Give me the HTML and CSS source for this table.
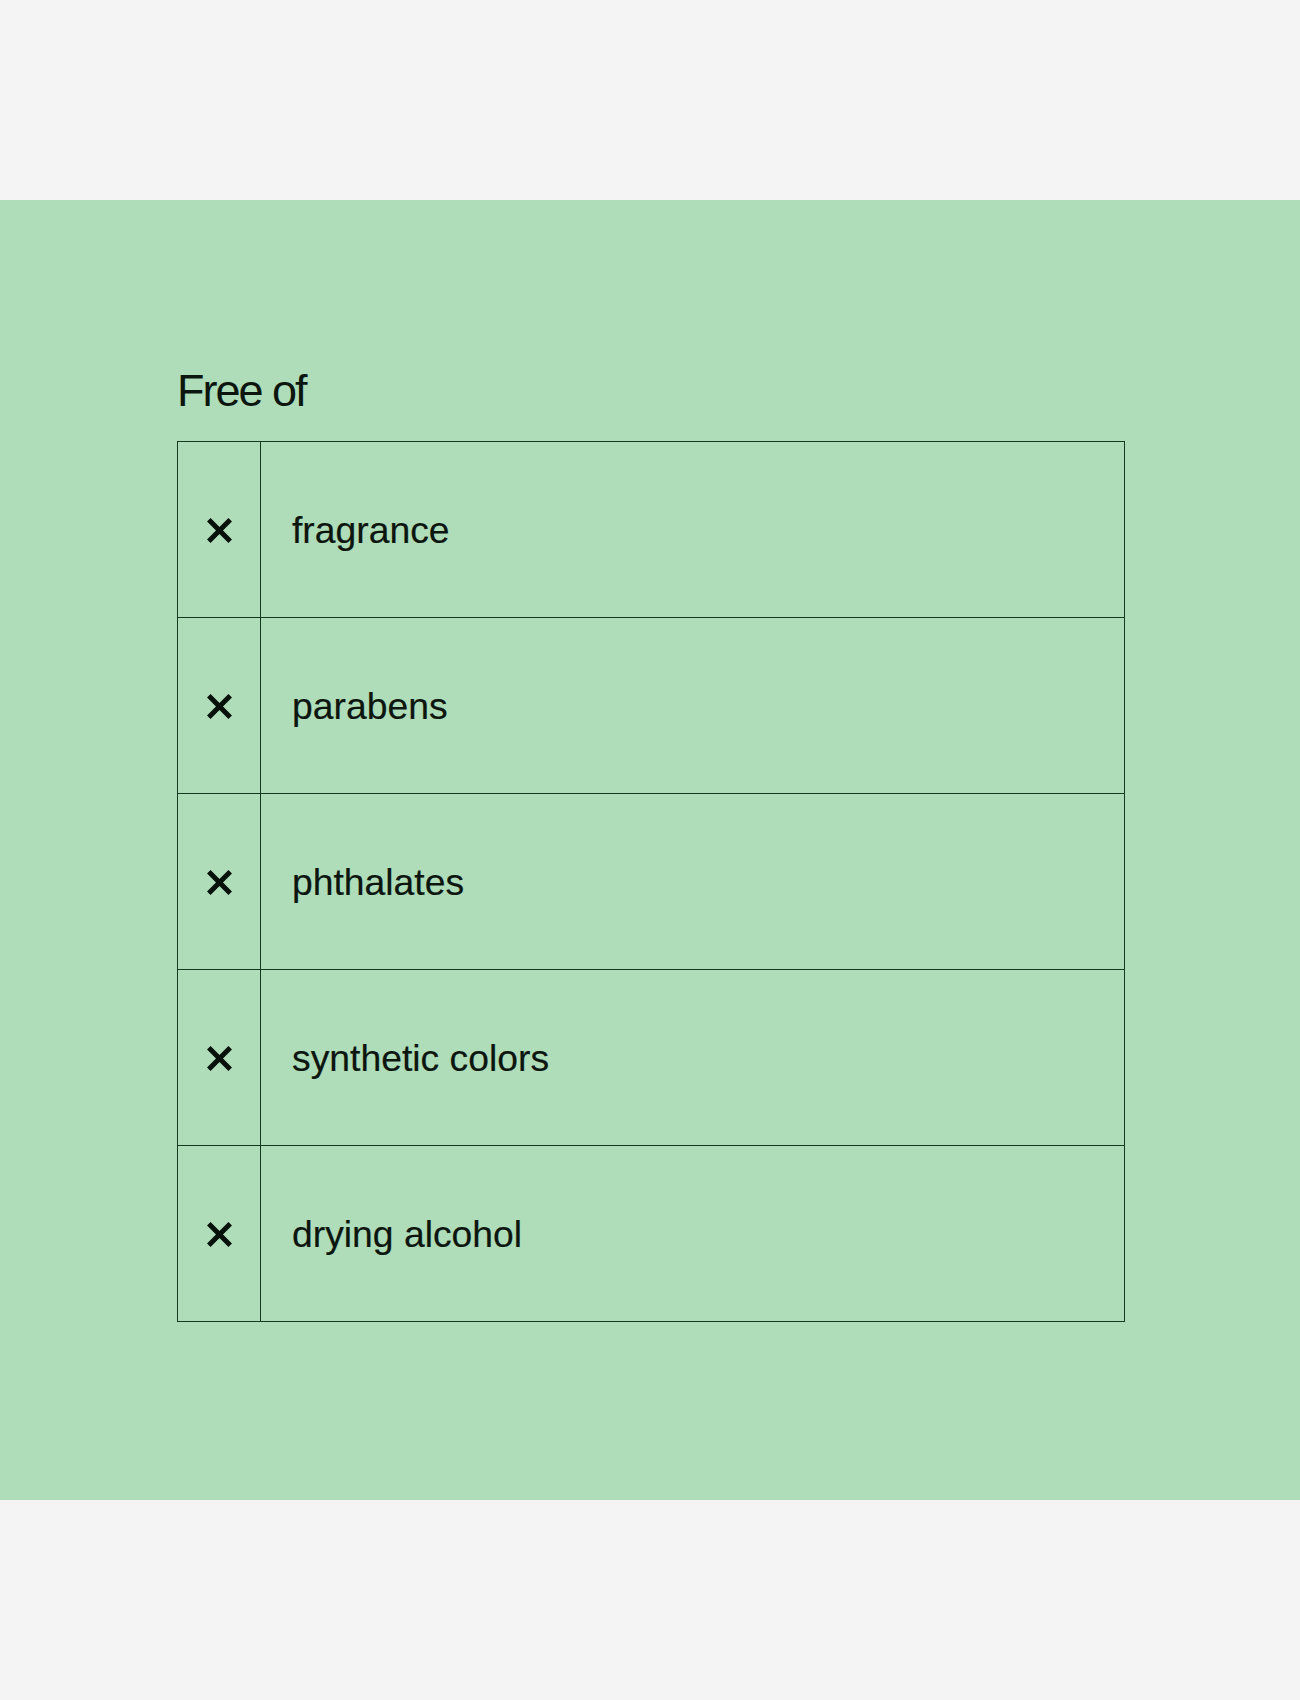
FILE: index.html
```html
<!DOCTYPE html>
<html lang="en">
<head>
<meta charset="utf-8">
<title>Free of</title>
<link rel="stylesheet" href="styles.css">
</head>
<body>
<div class="page">
  <section class="panel">
    <h2 class="title">Free of</h2>
    <div class="list">
      <div class="row">
        <div class="mark"><svg class="x" viewBox="0 0 25 25"><path d="M1.8 1.8 L23.2 23.2 M23.2 1.8 L1.8 23.2"/></svg></div>
        <div class="label">fragrance</div>
      </div>
      <div class="row">
        <div class="mark"><svg class="x" viewBox="0 0 25 25"><path d="M1.8 1.8 L23.2 23.2 M23.2 1.8 L1.8 23.2"/></svg></div>
        <div class="label">parabens</div>
      </div>
      <div class="row">
        <div class="mark"><svg class="x" viewBox="0 0 25 25"><path d="M1.8 1.8 L23.2 23.2 M23.2 1.8 L1.8 23.2"/></svg></div>
        <div class="label">phthalates</div>
      </div>
      <div class="row">
        <div class="mark"><svg class="x" viewBox="0 0 25 25"><path d="M1.8 1.8 L23.2 23.2 M23.2 1.8 L1.8 23.2"/></svg></div>
        <div class="label">synthetic colors</div>
      </div>
      <div class="row">
        <div class="mark"><svg class="x" viewBox="0 0 25 25"><path d="M1.8 1.8 L23.2 23.2 M23.2 1.8 L1.8 23.2"/></svg></div>
        <div class="label">drying alcohol</div>
      </div>
    </div>
  </section>
</div>
</body>
</html>
```

FILE: styles.css
```css
html, body {
  margin: 0;
  padding: 0;
  background: #f4f4f4;
}

.page {
  padding: 200px 0;
  font-family: "Liberation Sans", Arial, sans-serif;
  color: #0c160f;
}

.panel {
  height: 1300px;
  box-sizing: border-box;
  background: #afddb9;
  padding: 165px 175px 0 177px;
}

.title {
  margin: 0 0 24px 0;
  font-size: 45px;
  font-weight: 400;
  line-height: normal;
  letter-spacing: -2px;
}

.list {
  width: 948px;
  box-sizing: border-box;
  border: 1px solid #163a20;
}

.row {
  display: flex;
  height: 175px;
}

.row + .row {
  border-top: 1px solid #163a20;
}

.mark {
  width: 83px;
  flex: none;
  border-right: 1px solid #163a20;
  display: flex;
  align-items: center;
  justify-content: center;
  padding-top: 1px;
  box-sizing: border-box;
}

.x {
  width: 25px;
  height: 25px;
  display: block;
}

.x path {
  stroke: #08100a;
  stroke-width: 5;
  fill: none;
}

.label {
  flex: 1;
  display: flex;
  align-items: center;
  padding-left: 31px;
  padding-top: 2px;
  font-size: 37.3px;
  line-height: normal;
  -webkit-text-stroke: 0.2px #0c160f;
}
```
